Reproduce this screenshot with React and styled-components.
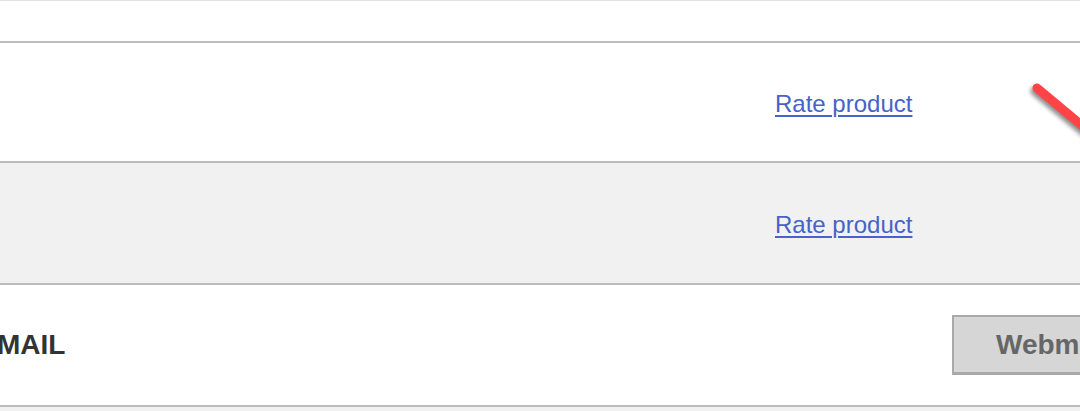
import React from 'react';
import styled, { createGlobalStyle } from 'styled-components';

const GlobalStyle = createGlobalStyle`
  html, body {
    margin: 0;
    padding: 0;
    background: #ffffff;
    overflow: hidden;
  }
  body {
    font-family: 'Liberation Sans', Arial, sans-serif;
  }
`;

const colors = {
  border: '#bcbcbc',
  topLine: '#e2e2e2',
  stripe: '#f1f1f1',
  link: '#4563c9',
  text: '#333333',
  buttonBg: '#d6d6d6',
  buttonBorder: '#a9a9a9',
  buttonText: '#666666',
};

const Page = styled.div`
  position: relative;
  width: 1080px;
  height: 411px;
  overflow: hidden;
  background: ${colors.stripe};
`;

const Header = styled.div`
  height: 40px;
  background: #ffffff;
  border-top: 1px solid ${colors.topLine};
`;

const Row = styled.div`
  display: grid;
  grid-template-columns: 775px 177px 1fr;
  align-items: center;
  height: ${(p) => p.$height}px;
  border-top: 2px solid ${colors.border};
  background: ${(p) => (p.$striped ? colors.stripe : '#ffffff')};
`;

const Label = styled.div`
  grid-column: 1;
  margin-left: -3px;
  font-size: 28px;
  font-weight: 700;
  color: ${colors.text};
  white-space: nowrap;
`;

const RateLink = styled.a`
  grid-column: 2;
  margin-top: 3px;
  font-size: 24px;
  color: ${colors.link};
  text-decoration: underline;
  text-underline-offset: 3px;
  text-decoration-thickness: 2px;
  white-space: nowrap;
`;

const ButtonCell = styled.div`
  grid-column: 3;
  display: flex;
`;

const WebmailButton = styled.button`
  height: 60px;
  padding: 0 42px;
  background: ${colors.buttonBg};
  border: 2px solid ${colors.buttonBorder};
  border-bottom-width: 3px;
  font-family: 'Liberation Sans', Arial, sans-serif;
  font-size: 28px;
  font-weight: 700;
  color: ${colors.buttonText};
  white-space: nowrap;
  flex-shrink: 0;
`;

const Arrow = styled.svg`
  position: absolute;
  left: 1020px;
  top: 70px;
  overflow: visible;
  filter: drop-shadow(-2px 3px 2px rgba(0, 0, 0, 0.45));
`;

export default function App() {
  return (
    <>
      <GlobalStyle />
      <Page>
        <Header />
        <Row $height={118}>
          <RateLink href="#">Rate product</RateLink>
        </Row>
        <Row $height={120} $striped>
          <RateLink href="#">Rate product</RateLink>
        </Row>
        <Row $height={120}>
          <Label>MAIL</Label>
          <ButtonCell>
            <WebmailButton type="button">Webmail</WebmailButton>
          </ButtonCell>
        </Row>
        <Row $height={20} $striped />
        <Arrow width="60" height="80" viewBox="0 0 60 80">
          <line x1="17" y1="18" x2="84" y2="74" stroke="#ff4447" strokeWidth="9" strokeLinecap="round" />
        </Arrow>
      </Page>
    </>
  );
}
